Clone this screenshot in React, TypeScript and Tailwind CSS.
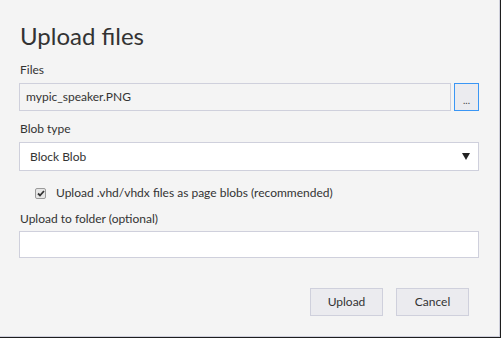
import React from 'react';

const font = { fontFamily: 'Lato, "Open Sans", sans-serif' };

export default function App() {
  return (
    <div className="w-[501px] h-[338px] bg-[#1e1e1e] pr-px pb-px" style={font}>
      {/* 对话框主体 */}
      <div className="h-full bg-[#f4f4f4] border-r border-b border-[#cfd0dc] pl-[19px] pr-[20px] pt-[20px] text-[#333]">
        <h1 className="h-[32px] text-[24px] leading-[32px] font-normal text-[#333] pl-px">Upload files</h1>

        {/* 文件 */}
        <div className="mt-[10px] h-[16px] text-[12px] leading-[16px] pl-px">Files</div>
        <div className="mt-[5px] flex gap-[3px]">
          <div className="flex-1 h-[28px] border border-[#cfd0dc] bg-[#f4f4f4] px-[6px] text-[12px] leading-[26px]">
            mypic_speaker.PNG
          </div>
          <button className="w-[25px] h-[28px] border border-[#3a96f5] bg-[#ebebef] text-[10px] leading-[26px] text-[#444] pt-[3px]">
            ...
          </button>
        </div>

        {/* Blob 类型 */}
        <div className="mt-[10px] h-[16px] text-[12px] leading-[16px] pl-px">Blob type</div>
        <div className="mt-[5px] h-[29px] border border-[#cfd0dc] bg-white flex items-center justify-between pl-[10px] pr-[8px] text-[12px]">
          <span>Block Blob</span>
          <svg width="8" height="7" viewBox="0 0 8 7">
            <path d="M0 0 H8 L4 7 Z" fill="#222" />
          </svg>
        </div>

        {/* 复选框 */}
        <div className="mt-[15px] ml-[16px] flex items-center gap-[10px] h-[14px] text-[12px]">
          <span className="w-[11px] h-[11px] rounded-[2px] border border-[#9a9a9a] bg-[#e6e6e6] flex items-center justify-center">
            <svg width="8" height="7" viewBox="0 0 8 7">
              <path d="M1 3.5 L3 5.5 L7 1" stroke="#333" strokeWidth="1.8" fill="none" />
            </svg>
          </span>
          <span>Upload .vhd/vhdx files as page blobs (recommended)</span>
        </div>

        {/* 目标文件夹 */}
        <div className="mt-[11px] h-[16px] text-[12px] leading-[16px] pl-px">Upload to folder (optional)</div>
        <div className="mt-[4px] h-[27px] border border-[#cfd0dc] bg-white" />

        {/* 操作按钮 */}
        <div className="mt-[30px] flex justify-end gap-[13px] pr-[10px]">
          <button className="w-[73px] h-[28px] border border-[#cfd0dc] bg-[#ebebef] text-[12px] text-[#333]">Upload</button>
          <button className="w-[73px] h-[28px] border border-[#cfd0dc] bg-[#ebebef] text-[12px] text-[#333]">Cancel</button>
        </div>
      </div>
    </div>
  );
}
